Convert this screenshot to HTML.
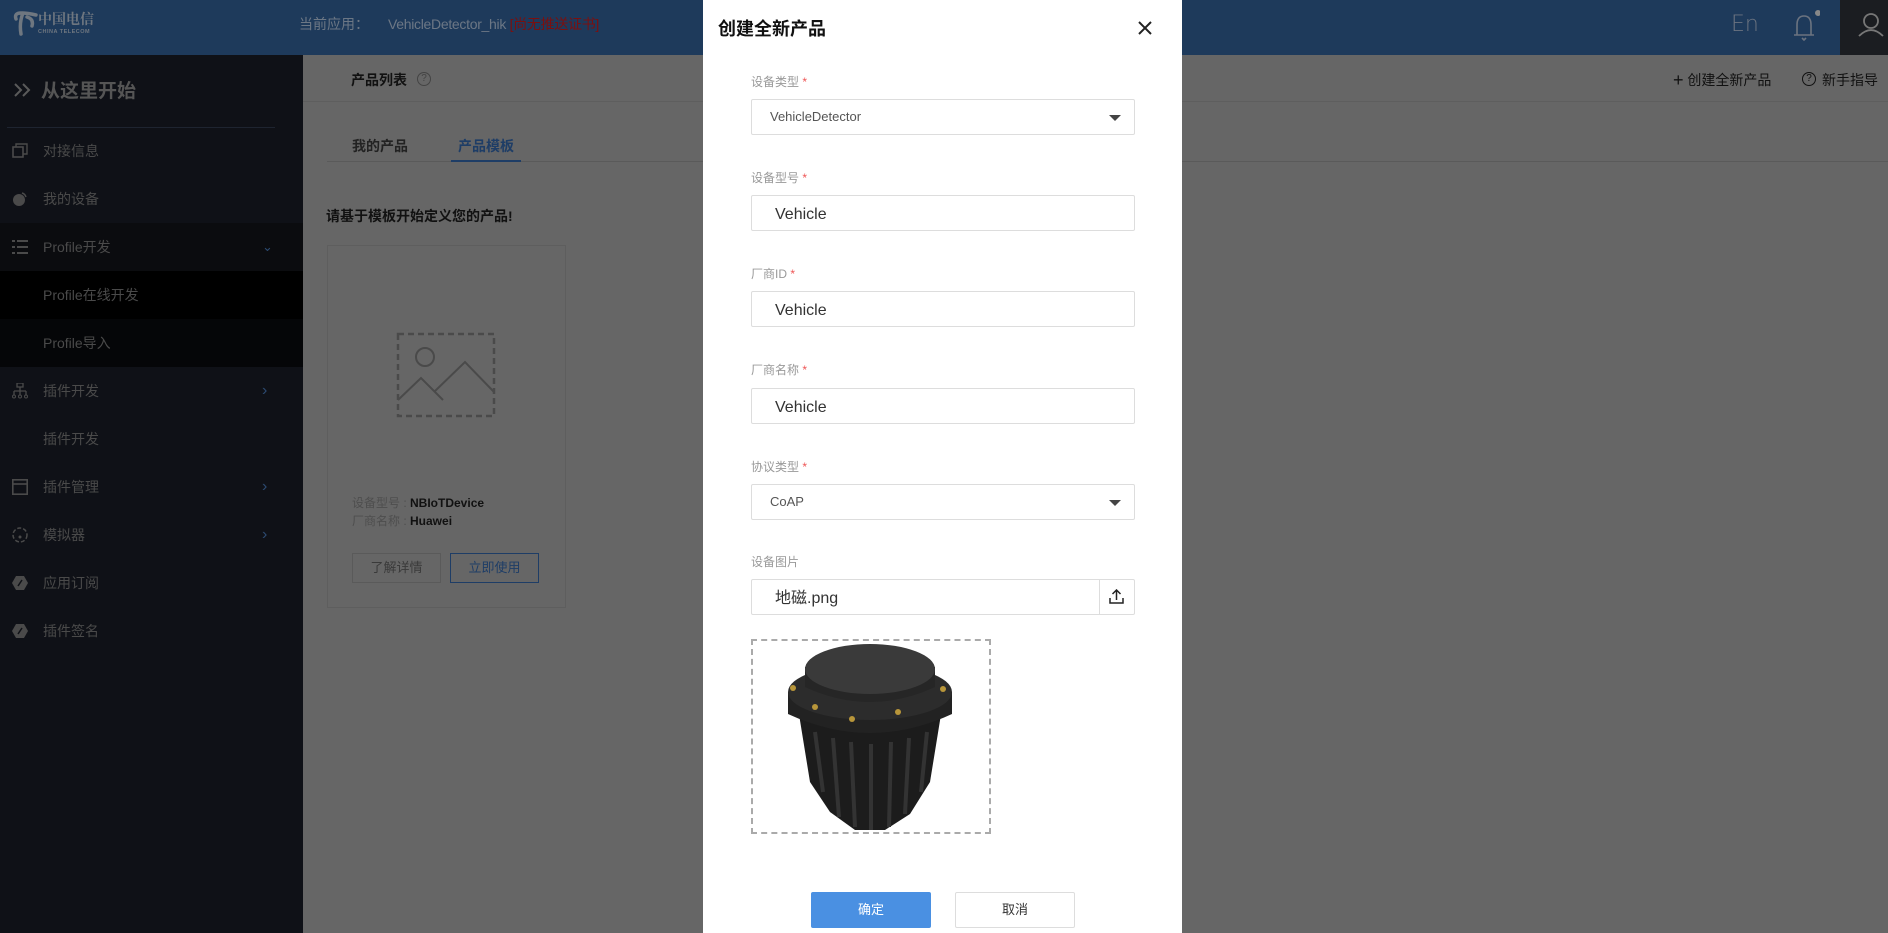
<!DOCTYPE html>
<html><head><meta charset="utf-8">
<style>
*{margin:0;padding:0;box-sizing:border-box}
body{width:1888px;height:933px;overflow:hidden;position:relative;background:#666;font-family:"Liberation Sans","Noto Sans CJK SC",sans-serif;}
.abs{position:absolute}
.hdr{left:0;top:0;width:1888px;height:55px;background:#1e3a5b}
.side{left:0;top:55px;width:303px;height:878px;background:#0f1117}
.si{position:absolute;left:0;width:303px;height:48px;line-height:48px;color:#4a4a4a;font-size:14px}
.si .t{position:absolute;left:43px}
.si .ic{position:absolute;left:12px;top:16px;width:16px;height:16px}
.si .ar{position:absolute;left:262px;color:#2c4a70;font-size:16px}
.lbl{position:absolute;left:751px;font-size:12px;color:#999}
.lbl b{color:#e55;font-weight:normal}
.box{position:absolute;left:751px;width:384px;height:36px;border:1px solid #ddd;border-radius:2px;background:#fff}
.box .v{position:absolute;left:23px;top:2px;line-height:34px;font-size:16px;color:#333}
.box .s{position:absolute;left:18px;top:0;line-height:34px;font-size:13px;color:#555}
.tri{position:absolute;right:13px;top:15px;width:0;height:0;border-left:6px solid transparent;border-right:6px solid transparent;border-top:6px solid #444}
</style></head><body>
<div class="abs hdr"></div>
<div class="abs" style="left:1840px;top:0;width:48px;height:55px;background:#1b1d21"></div>
<svg class="abs" style="left:13px;top:8px" width="26" height="28" viewBox="0 0 26 28"><path d="M3 11 Q1 5 8 5 Q15 5 23 7 M10 5 Q6 15 8 26 M14 9 Q21 11 19 18" stroke="#6f7780" stroke-width="3.5" fill="none" stroke-linecap="round"/></svg>
<div class="abs" style="left:38px;top:9px;color:#6f7780;font-size:14px;font-weight:bold;font-family:'Noto Serif CJK SC',serif">中国电信</div>
<div class="abs" style="left:38px;top:29px;color:#6f7780;font-size:5.5px;font-weight:bold;letter-spacing:.5px">CHINA TELECOM</div>
<div class="abs" style="left:299px;top:14px;color:#6c7785;font-size:14px">当前应用：</div>
<div class="abs" style="left:388px;top:14px;color:#6c7785;font-size:14px;letter-spacing:-.3px">VehicleDetector_hik <span style="color:#7a1010">[尚无推送证书]</span></div>
<div class="abs" style="left:1731px;top:12px;color:#6b7380;font-size:22px;font-family:'DejaVu Sans',sans-serif;font-weight:200">En</div>
<svg class="abs" style="left:1790px;top:10px" width="30" height="32" viewBox="0 0 30 32"><path d="M4 25 H24 M7 25 V15 Q7 6 14 6 Q21 6 21 15 V25 M12 28 L14 30 L16 28" stroke="#6b7380" stroke-width="1.6" fill="none"/><circle cx="28" cy="3" r="3" fill="#888"/></svg>
<svg class="abs" style="left:1858px;top:12px" width="26" height="26" viewBox="0 0 26 26"><circle cx="13" cy="9" r="7" stroke="#777" stroke-width="1.8" fill="none"/><path d="M1 24 Q13 12 25 24" stroke="#777" stroke-width="1.8" fill="none"/></svg>

<div class="abs side">
 <svg class="abs" style="left:14px;top:28px" width="18" height="14" viewBox="0 0 18 14"><path d="M1 1l6 6-6 6M9 1l6 6-6 6" stroke="#5a5a5a" stroke-width="2" fill="none"/></svg>
 <div class="abs" style="left:41px;top:21px;color:#555;font-size:19px;font-weight:bold">从这里开始</div>
 <div class="abs" style="left:7px;top:72px;width:268px;height:1px;background:#1e2430"></div>
 <div class="si" style="top:72px"><svg class="ic" viewBox="0 0 16 16"><rect x="1" y="4" width="10" height="10" fill="none" stroke="#4a4a4a" stroke-width="1.6"/><path d="M4 4V1h11v10h-4" fill="none" stroke="#4a4a4a" stroke-width="1.4"/></svg><span class="t">对接信息</span></div>
 <div class="si" style="top:120px"><svg class="ic" viewBox="0 0 16 16"><circle cx="7" cy="9" r="6" fill="#4a4a4a"/><path d="M10 2 A6 6 0 0 1 14 6" stroke="#4a4a4a" stroke-width="1.5" fill="none"/></svg><span class="t">我的设备</span></div>
 <div class="si" style="top:168px;background:#0b0c0f"><svg class="ic" viewBox="0 0 16 16"><path d="M0 2h3M5 2h11M0 8h3M5 8h11M0 14h3M5 14h11" stroke="#4a4a4a" stroke-width="2"/></svg><span class="t">Profile开发</span><span class="ar" style="font-size:13px">⌄</span></div>
 <div class="si" style="top:216px;background:#000"><span class="t">Profile在线开发</span></div>
 <div class="si" style="top:264px;background:#050608"><span class="t">Profile导入</span></div>
 <div class="si" style="top:312px"><svg class="ic" viewBox="0 0 16 16"><rect x="5" y="0" width="6" height="4" fill="none" stroke="#4a4a4a" stroke-width="1.3"/><path d="M8 4v4M2 8h12M2 8v4M8 8v4M14 8v4" stroke="#4a4a4a" stroke-width="1.3"/><circle cx="2" cy="13.5" r="1.5" fill="none" stroke="#4a4a4a"/><circle cx="8" cy="13.5" r="1.5" fill="none" stroke="#4a4a4a"/><circle cx="14" cy="13.5" r="1.5" fill="none" stroke="#4a4a4a"/></svg><span class="t">插件开发</span><span class="ar">›</span></div>
 <div class="si" style="top:360px"><span class="t">插件开发</span></div>
 <div class="si" style="top:408px"><svg class="ic" viewBox="0 0 16 16"><rect x="0.8" y="0.8" width="14.4" height="14.4" fill="none" stroke="#4a4a4a" stroke-width="1.6"/><path d="M1 5h14" stroke="#4a4a4a" stroke-width="1.6"/></svg><span class="t">插件管理</span><span class="ar">›</span></div>
 <div class="si" style="top:456px"><svg class="ic" viewBox="0 0 16 16"><circle cx="8" cy="8" r="7" fill="none" stroke="#4a4a4a" stroke-width="1.5" stroke-dasharray="4 2"/><circle cx="8" cy="10" r="1.5" fill="#4a4a4a"/></svg><span class="t">模拟器</span><span class="ar">›</span></div>
 <div class="si" style="top:504px"><svg class="ic" viewBox="0 0 16 16"><polygon points="4,1 12,1 16,8 12,15 4,15 0,8" fill="#4a4a4a"/><path d="M6 11 L10 5" stroke="#0f1117" stroke-width="1.5"/></svg><span class="t">应用订阅</span></div>
 <div class="si" style="top:552px"><svg class="ic" viewBox="0 0 16 16"><polygon points="4,1 12,1 16,8 12,15 4,15 0,8" fill="#4a4a4a"/><path d="M6 11 L10 5" stroke="#0f1117" stroke-width="1.5"/></svg><span class="t">插件签名</span></div>
</div>

<div class="abs" style="left:303px;top:101px;width:1585px;height:1px;background:#5e5e5e"></div>
<div class="abs" style="left:351px;top:70px;font-size:14px;color:#111;font-weight:bold">产品列表</div>
<div class="abs" style="left:417px;top:72px;width:14px;height:14px;border:1px solid #444;border-radius:50%;font-size:10px;line-height:12px;text-align:center;color:#444">?</div>
<div class="abs" style="left:1673px;top:69px;font-size:14px;color:#111"><span style="font-size:18px;position:relative;top:1px">+</span> 创建全新产品</div>
<div class="abs" style="left:1802px;top:72px;width:14px;height:14px;border:1.3px solid #111;border-radius:50%;font-size:10px;line-height:12px;text-align:center;color:#111">?</div>
<div class="abs" style="left:1822px;top:70px;font-size:14px;color:#111">新手指导</div>
<div class="abs" style="left:327px;top:161px;width:1561px;height:1px;background:#5a5a5a"></div>
<div class="abs" style="left:352px;top:136px;font-size:14px;color:#222;font-weight:bold">我的产品</div>
<div class="abs" style="left:458px;top:136px;font-size:14px;color:#1e3d66;font-weight:bold">产品模板</div>
<div class="abs" style="left:451px;top:160px;width:70px;height:2px;background:#1e3d66"></div>
<div class="abs" style="left:326px;top:206px;font-size:14px;color:#111;font-weight:bold">请基于模板开始定义您的产品!</div>
<div class="abs" style="left:327px;top:245px;width:239px;height:363px;border:1px solid #5e5e5e"></div>
<svg class="abs" style="left:396px;top:332px" width="100" height="86" viewBox="0 0 100 86"><rect x="2" y="2" width="96" height="82" fill="none" stroke="#4a4a4a" stroke-width="2.5" stroke-dasharray="6 4"/><circle cx="29" cy="25" r="9" fill="none" stroke="#4a4a4a" stroke-width="2"/><path d="M2 68 L25 46 L47 68 M38 60 L69 30 L98 60" fill="none" stroke="#4a4a4a" stroke-width="2"/></svg>
<div class="abs" style="left:352px;top:494px;font-size:12px;color:#4e4e4e">设备型号 : <b style="color:#111">NBIoTDevice</b></div>
<div class="abs" style="left:352px;top:512px;font-size:12px;color:#4e4e4e">厂商名称 : <b style="color:#111">Huawei</b></div>
<div class="abs" style="left:352px;top:553px;width:89px;height:30px;border:1px solid #5a5a5a;font-size:13px;line-height:28px;text-align:center;color:#3a3a3a">了解详情</div>
<div class="abs" style="left:450px;top:553px;width:89px;height:30px;border:1px solid #1e3d66;font-size:13px;line-height:28px;text-align:center;color:#1e3d66">立即使用</div>

<div class="abs" style="left:703px;top:0;width:479px;height:933px;background:#fff"></div>
<div class="abs" style="left:718px;top:15px;font-size:18px;color:#111;font-weight:bold">创建全新产品</div>
<svg class="abs" style="left:1138px;top:21px" width="14" height="14" viewBox="0 0 14 14"><path d="M1 1L13 13M13 1L1 13" stroke="#222" stroke-width="2"/></svg>

<div class="lbl" style="top:73px">设备类型 <b>*</b></div>
<div class="box" style="top:99px"><span class="s">VehicleDetector</span><div class="tri"></div></div>
<div class="lbl" style="top:169px">设备型号 <b>*</b></div>
<div class="box" style="top:195px"><span class="v">Vehicle</span></div>
<div class="lbl" style="top:265px">厂商ID <b>*</b></div>
<div class="box" style="top:291px"><span class="v">Vehicle</span></div>
<div class="lbl" style="top:361px">厂商名称 <b>*</b></div>
<div class="box" style="top:388px"><span class="v">Vehicle</span></div>
<div class="lbl" style="top:458px">协议类型 <b>*</b></div>
<div class="box" style="top:484px"><span class="s">CoAP</span><div class="tri"></div></div>
<div class="lbl" style="top:553px">设备图片</div>
<div class="box" style="top:579px"><span class="v">地磁.png</span>
 <div style="position:absolute;right:0;top:0;width:35px;height:34px;border-left:1px solid #ddd"></div>
 <svg style="position:absolute;right:10px;top:9px" width="15" height="15" viewBox="0 0 15 15"><path d="M1 9v5h13V9M7.5 11V1M3.5 5l4-4 4 4" stroke="#222" stroke-width="1.5" fill="none"/></svg>
</div>
<div class="abs" style="left:751px;top:639px;width:240px;height:195px;border:2px dashed #aaa"></div>
<svg class="abs" style="left:785px;top:642px" width="170" height="190" viewBox="0 0 170 190">
 <path d="M12 60 L25 140 L45 170 L70 188 L100 188 L125 172 L145 140 L158 60 Z" fill="#1c1c1c"/>
 <g stroke="#333" stroke-width="4"><path d="M30 90L38 150M48 96L54 175M66 100L70 185M86 102L86 188M106 100L104 185M124 96L120 172M142 90L136 150"/></g>
 <path d="M3 50 L3 72 Q85 110 167 72 L167 50 Z" fill="#222"/>
 <ellipse cx="85" cy="50" rx="82" ry="28" fill="#2c2c2c"/>
 <path d="M20 25 L20 45 Q85 75 150 45 L150 25 Z" fill="#262626"/>
 <ellipse cx="85" cy="27" rx="65" ry="25" fill="#3a3a3a"/>
 <g fill="#b8963a"><circle cx="8" cy="46" r="3"/><circle cx="30" cy="65" r="3"/><circle cx="67" cy="77" r="3"/><circle cx="113" cy="70" r="3"/><circle cx="158" cy="47" r="3"/></g>
</svg>
<div class="abs" style="left:811px;top:892px;width:120px;height:36px;background:#4a90e2;border-radius:2px;color:#fff;font-size:13px;line-height:36px;text-align:center">确定</div>
<div class="abs" style="left:955px;top:892px;width:120px;height:36px;border:1px solid #ddd;border-radius:2px;color:#333;font-size:13px;line-height:34px;text-align:center">取消</div>
</body></html>
